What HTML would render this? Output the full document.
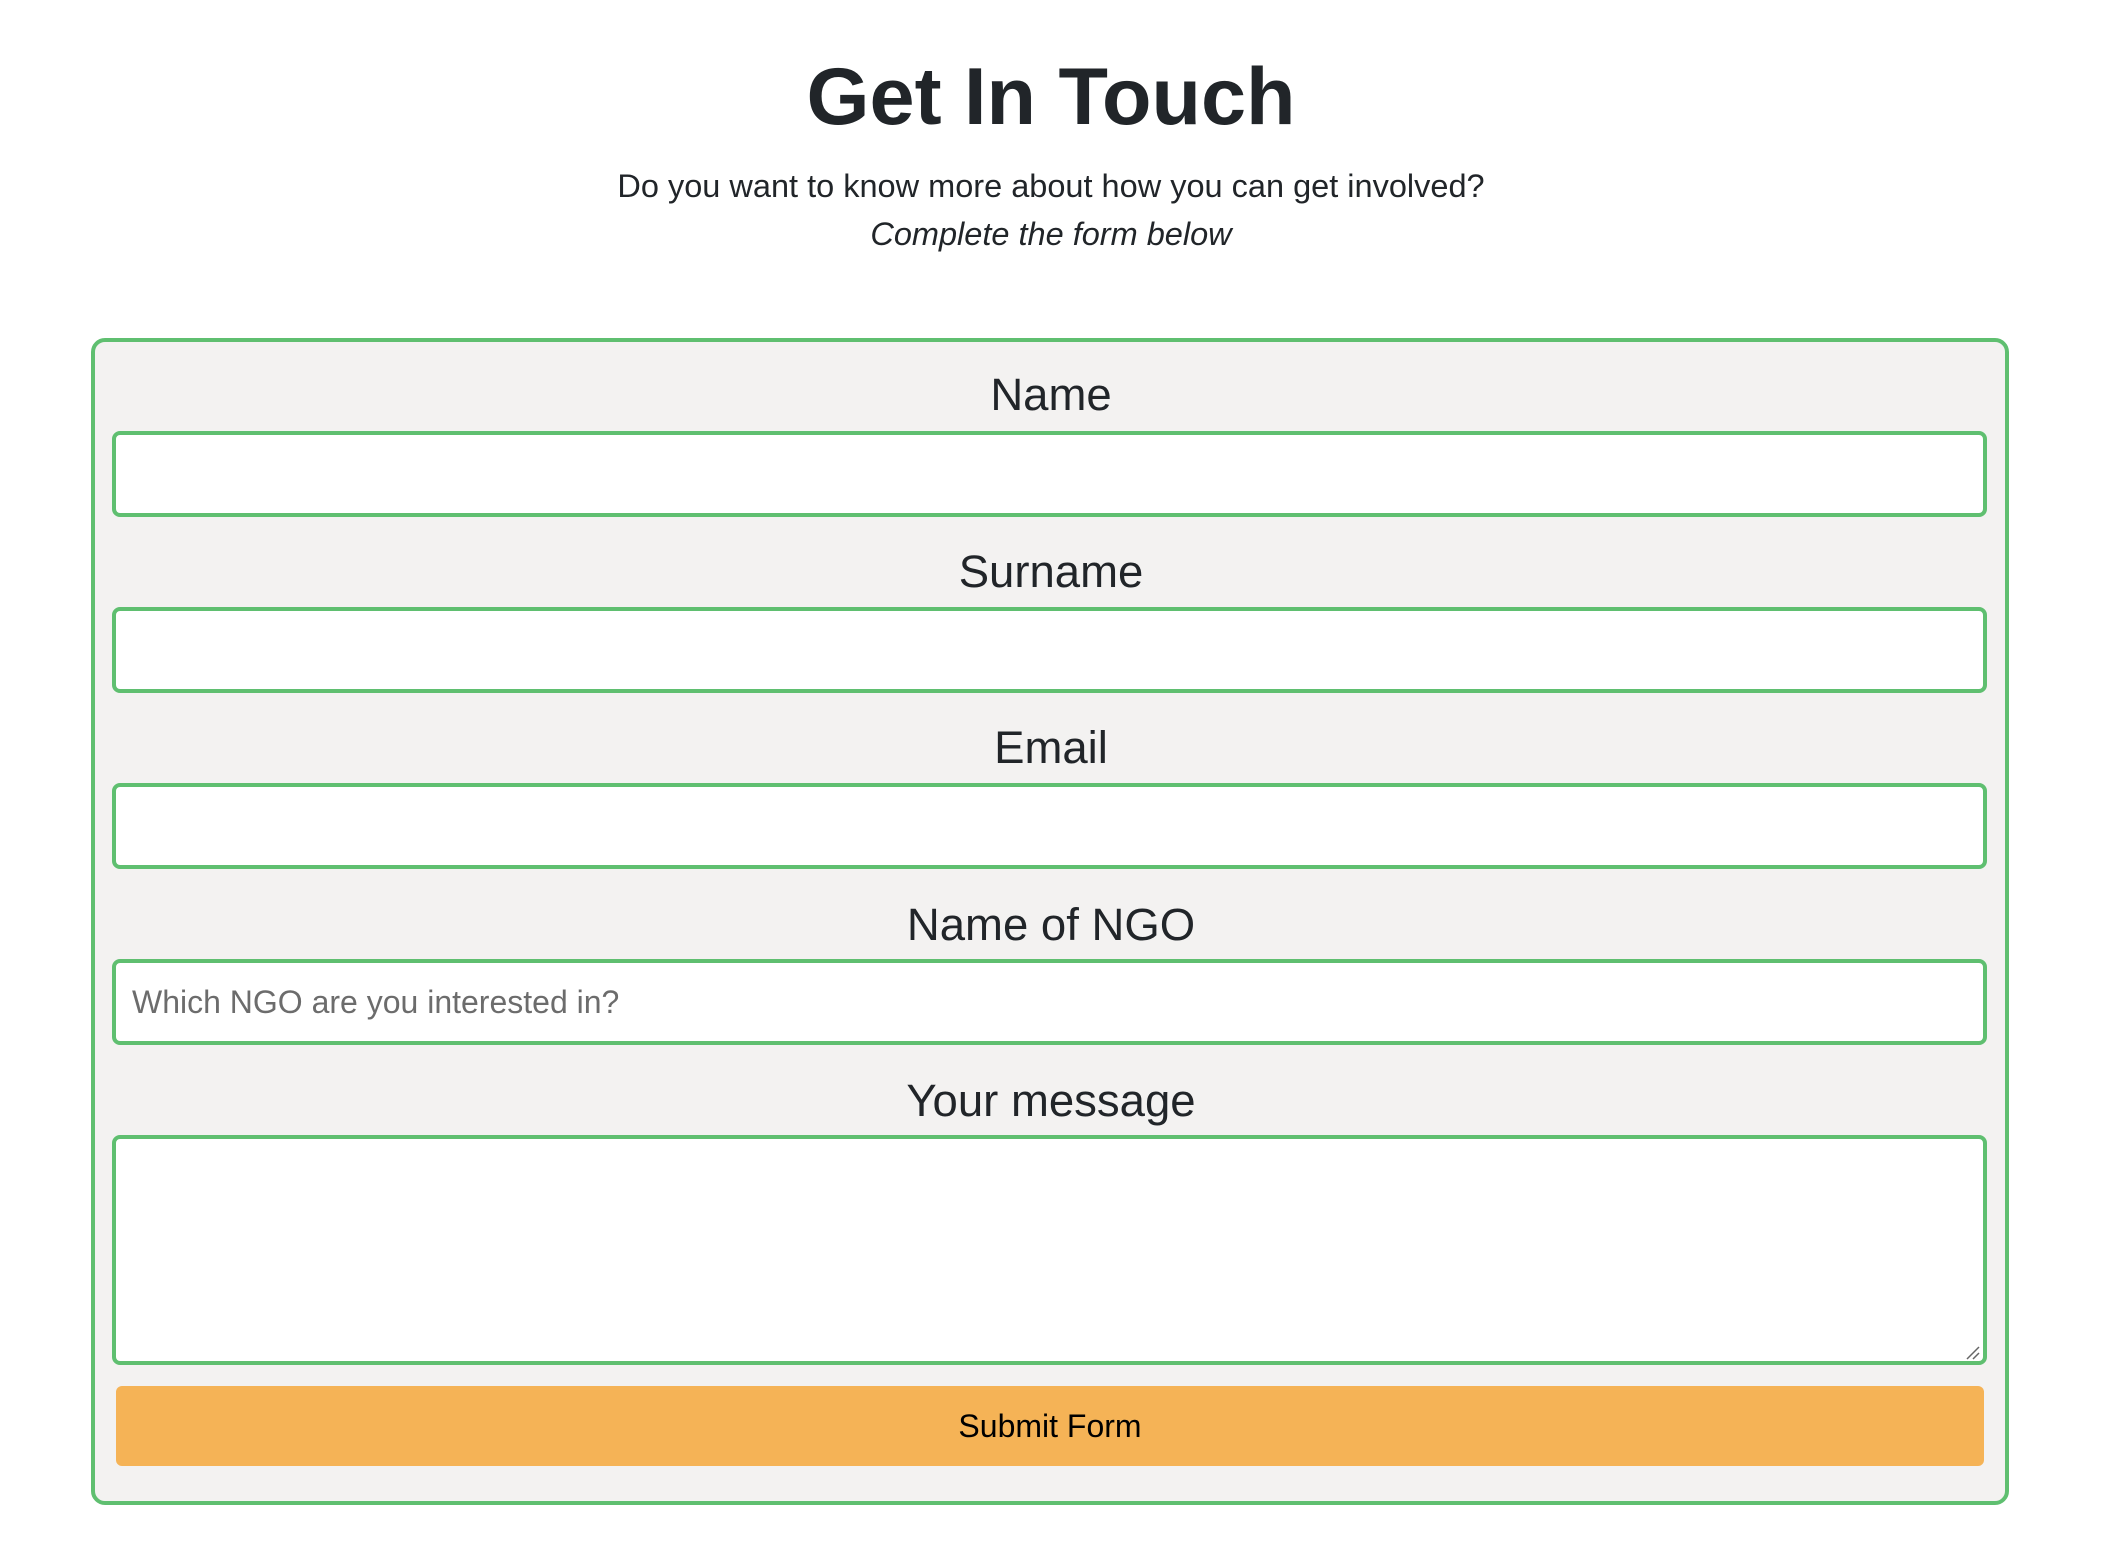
<!DOCTYPE html>
<html><head><meta charset="utf-8"><style>
*{box-sizing:border-box;margin:0;padding:0}
body{width:2112px;height:1558px;background:#fff;font-family:"Liberation Sans",Arial,sans-serif;color:#212529;position:relative;overflow:hidden}
.c{position:absolute;left:0;width:2102px;text-align:center}
h1{font-size:81px;font-weight:bold;top:47px;line-height:100px}
.sub{font-size:32.5px;top:168px}
.it{font-size:32.5px;top:216px;font-style:italic}
.box{position:absolute;left:91px;top:338px;width:1918px;height:1167px;border:4px solid #5fbf70;border-radius:14px;background:#f3f2f1}
.lab{position:absolute;left:0;width:2102px;text-align:center;font-size:45.5px;line-height:50px}
.in{position:absolute;left:112px;width:1875px;height:86px;border:4px solid #5fbf70;border-radius:8px;background:#fff}
.ph{position:absolute;left:132px;font-size:32px;color:#6c6c6c;line-height:86px}
.btn{position:absolute;left:116px;top:1386px;width:1868px;height:80px;background:#f5b356;border-radius:6px;text-align:center;font-size:32px;line-height:80px;color:#000}
</style></head><body>
<h1 class="c">Get In Touch</h1>
<div class="c sub">Do you want to know more about how you can get involved?</div>
<div class="c it">Complete the form below</div>
<div class="box"></div>
<div class="lab" style="top:370px">Name</div>
<div class="in" style="top:431px"></div>
<div class="lab" style="top:547px">Surname</div>
<div class="in" style="top:607px"></div>
<div class="lab" style="top:723px">Email</div>
<div class="in" style="top:783px"></div>
<div class="lab" style="top:900px">Name of NGO</div>
<div class="in" style="top:959px"></div>
<div class="ph" style="top:959px">Which NGO are you interested in?</div>
<div class="lab" style="top:1076px">Your message</div>
<div class="in" style="top:1135px;height:230px"></div>
<svg style="position:absolute;left:1965px;top:1345px" width="16" height="16"><path d="M2 14L14 2M8 14L14 8" stroke="#666" stroke-width="1.5"/></svg>
<div class="btn">Submit Form</div>
</body></html>
